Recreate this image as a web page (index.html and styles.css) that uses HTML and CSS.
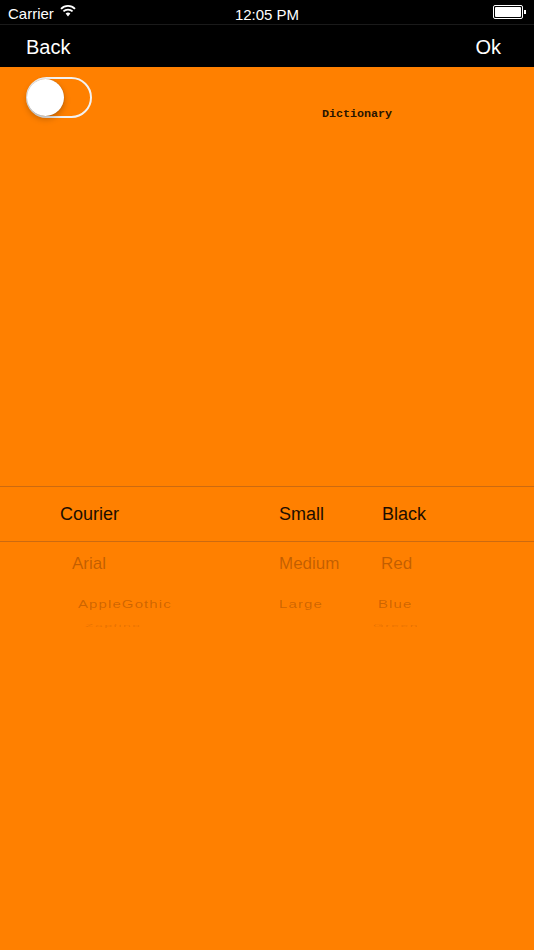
FILE: index.html
```html
<!DOCTYPE html>
<html>
<head>
<meta charset="utf-8">
<link rel="stylesheet" href="styles.css">
</head>
<body>
<div class="screen">
  <div class="status">
    <div class="status-left">
      <span>Carrier</span>
      <svg class="wifi" width="16" height="12" viewBox="0 0 16 12">
        <path d="M8 11.5 L5.6 8.6 A3.6 3.6 0 0 1 10.4 8.6 Z" fill="#fff"/>
        <path d="M3.4 6.4 A6.6 6.6 0 0 1 12.6 6.4" stroke="#fff" stroke-width="1.8" fill="none"/>
        <path d="M1 3.8 A10 10 0 0 1 15 3.8" stroke="#fff" stroke-width="1.8" fill="none"/>
      </svg>
    </div>
    <div class="status-time">12:05 PM</div>
    <div class="status-right">
      <div class="battery"><div class="battery-fill"></div></div>
      <div class="battery-tip"></div>
    </div>
  </div>
  <div class="navbar">
    <span class="nav-btn">Back</span>
    <span class="nav-btn">Ok</span>
  </div>
  <div class="content">
    <div class="top-row">
      <div class="toggle"><div class="thumb"></div></div>
      <div class="dict">Dictionary</div>
    </div>
    <div class="picker">
      <div class="picker-sel">
        <span class="col c1">Courier</span>
        <span class="col c2">Small</span>
        <span class="col c3">Black</span>
      </div>
      <div class="row r1">
        <span class="col c1">Arial</span>
        <span class="col c2">Medium</span>
        <span class="col c3">Red</span>
      </div>
      <div class="row r2">
        <span class="col c1">AppleGothic</span>
        <span class="col c2">Large</span>
        <span class="col c3">Blue</span>
      </div>
      <div class="row r3">
        <span class="col c1">Zapfino</span>
        <span class="col c2"></span>
        <span class="col c3">Green</span>
      </div>
    </div>
  </div>
</div>
</body>
</html>
```
FILE: styles.css
```css
html, body {
  margin: 0;
  padding: 0;
}
body {
  width: 534px;
  height: 950px;
  background: #ff8000;
  font-family: "Liberation Sans", Arial, sans-serif;
  overflow: hidden;
}
.screen {
  display: flex;
  flex-direction: column;
  height: 950px;
}
.status {
  height: 25px;
  background: #000;
  border-bottom: 1px solid #1a1a1a;
  color: #fff;
  display: flex;
  align-items: center;
  justify-content: space-between;
  padding: 2px 8px 0 8px;
  font-size: 15px;
  box-sizing: border-box;
  position: relative;
}
.status-left {
  display: flex;
  align-items: center;
  gap: 6px;
}
.wifi {
  margin-top: -4px;
}
.status-time {
  position: absolute;
  left: 0;
  right: 0;
  text-align: center;
  font-size: 15px;
  top: 6px;
}
.status-right {
  display: flex;
  align-items: center;
  margin-top: -2px;
}
.battery {
  width: 26px;
  height: 10px;
  border: 1px solid #fff;
  border-radius: 2px;
  padding: 1px;
  box-sizing: content-box;
}
.battery-fill {
  width: 100%;
  height: 100%;
  background: #fff;
  border-radius: 1px;
}
.battery-tip {
  width: 2px;
  height: 4px;
  background: #fff;
  margin-left: 1px;
}
.navbar {
  height: 42px;
  background: #000;
  color: #fff;
  display: flex;
  align-items: center;
  justify-content: space-between;
  padding: 3px 33px 0 26px;
  box-sizing: border-box;
  font-size: 20px;
}
.content {
  flex: 1;
  display: flex;
  flex-direction: column;
}
.top-row {
  display: flex;
  align-items: flex-start;
  padding: 10px 0 0 26px;
  height: 419px;
  box-sizing: border-box;
}
.toggle {
  width: 62px;
  height: 37px;
  border: 2px solid #f2f2f2;
  border-radius: 21px;
  position: relative;
  box-sizing: content-box;
  flex: none;
}
.thumb {
  position: absolute;
  left: -1px;
  top: 0;
  width: 37px;
  height: 37px;
  border-radius: 50%;
  background: #fff;
  box-shadow: 0 3px 6px rgba(0,0,0,0.25), 0 0 1px rgba(0,0,0,0.3);
}
.dict {
  font-family: "Liberation Mono", "Courier New", monospace;
  font-size: 11.7px;
  font-weight: bold;
  color: #2a1500;
  margin-left: 230px;
  margin-top: 30px;
}
.picker {
  border-top: 1px solid #cc6a10;
  display: flex;
  flex-direction: column;
}
.picker-sel {
  height: 54px;
  border-bottom: 1px solid #cc6a10;
  display: flex;
  align-items: center;
  font-size: 18px;
  color: #1c0e00;
}
.col {
  display: inline-block;
}
.c1 { width: 279px; padding-left: 60px; box-sizing: border-box; }
.c2 { width: 103px; }
.c3 { width: 100px; }
.row {
  display: flex;
  align-items: center;
  color: rgba(80,30,0,0.35);
}
.r1 {
  height: 44px;
  font-size: 17px;
}
.r1 .c1 { padding-left: 72px; }
.r1 .c3 { margin-left: -1px; }
.r2 {
  height: 28px;
  font-size: 15px;
  transform: scaleY(0.78);
  letter-spacing: 1.1px;
  color: rgba(80,30,0,0.28);
  margin-top: 3px;
}
.r2 .c1 { padding-left: 78px; }
.r2 .c3 { margin-left: -4px; }
.r3 {
  height: 10px;
  font-size: 14px;
  transform: scaleY(0.3);
  letter-spacing: 1.4px;
  color: rgba(80,30,0,0.15);
  margin-top: 3px;
}
.r3 .c1 { padding-left: 85px; }
.r3 .c3 { margin-left: -9px; }
```
